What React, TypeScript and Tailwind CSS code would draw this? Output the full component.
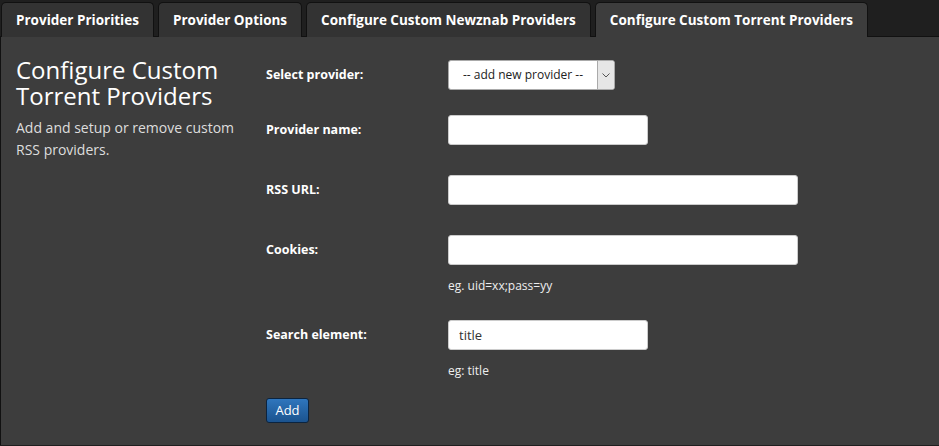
const tabs = [
  { label: 'Provider Priorities', active: false },
  { label: 'Provider Options', active: false },
  { label: 'Configure Custom Newznab Providers', active: false },
  { label: 'Configure Custom Torrent Providers', active: true },
]

function TextInput({ wide, value }: { wide?: boolean; value?: string }) {
  return (
    <input
      type="text"
      defaultValue={value}
      className={`h-[30px] ${wide ? 'w-[350px]' : 'w-[200px]'} rounded-[3px] border border-[#ccc] bg-white px-[10px] text-[13px] text-[#333] outline-none`}
    />
  )
}

export default function App() {
  return (
    <div className="min-h-[446px] bg-[#1f1f1f] font-['Open_Sans',sans-serif] text-white">
      <div className="flex gap-[4px] px-px pt-[2px]">
        {tabs.map((t) => (
          <div
            key={t.label}
            className={`-mb-px flex h-[35px] items-center rounded-t-[5px] border border-b-0 border-[#111] px-[14px] text-[13.5px] font-bold ${
              t.active ? 'z-10 bg-[#3d3d3d]' : 'bg-[#333]'
            }`}
          >
            {t.label}
          </div>
        ))}
      </div>

      <div className="flex min-h-[409px] border-l border-t border-[#111] bg-[#3d3d3d]">
        <div className="w-[265px] shrink-0 pl-[15px] pt-[20px]">
          <h3 className="w-[235px] text-[24px] leading-[26px] text-white">Configure Custom Torrent Providers</h3>
          <p className="mt-[8px] w-[235px] text-[14px] leading-[22px] text-[#ddd]">
            Add and setup or remove custom RSS providers.
          </p>
        </div>

        <div className="pt-[23px] text-[13px]">
          <div className="flex items-center">
            <label className="w-[182px] text-[12.5px] font-bold">Select provider:</label>
            <div className="flex h-[30px] w-[167px] overflow-hidden rounded-[3px] border border-[#aaa] bg-white text-[#222]">
              <div className="flex flex-1 items-center justify-center text-[12px]">-- add new provider --</div>
              <div className="flex w-[17px] items-center justify-center border-l border-[#aaa] bg-[#e6e6e6]">
                <svg width="8" height="5" viewBox="0 0 8 5" fill="none">
                  <path d="M0.5 0.5 L4 4 L7.5 0.5" stroke="#555" strokeWidth="1" />
                </svg>
              </div>
            </div>
          </div>

          <div className="mt-[25px] flex items-center">
            <label className="w-[182px] text-[12.5px] font-bold">Provider name:</label>
            <TextInput />
          </div>

          <div className="mt-[30px] flex items-center">
            <label className="w-[182px] text-[12.5px] font-bold">RSS URL:</label>
            <TextInput wide />
          </div>

          <div className="mt-[30px] flex items-center">
            <label className="w-[182px] text-[12.5px] font-bold">Cookies:</label>
            <TextInput wide />
          </div>
          <div className="ml-[182px] mt-[12px] text-[12px] leading-[17px] text-[#eee]">eg. uid=xx;pass=yy</div>

          <div className="mt-[26px] flex items-center">
            <label className="w-[182px] text-[12.5px] font-bold">Search element:</label>
            <TextInput value="title" />
          </div>
          <div className="ml-[182px] mt-[12px] text-[12px] leading-[17px] text-[#eee]">eg: title</div>

          <button className="mt-[19px] h-[25px] w-[43px] rounded-[3px] border border-[#0b2440] bg-gradient-to-b from-[#2f76bd] to-[#1b538f] text-[13px] text-white">
            Add
          </button>
        </div>
      </div>
    </div>
  )
}
